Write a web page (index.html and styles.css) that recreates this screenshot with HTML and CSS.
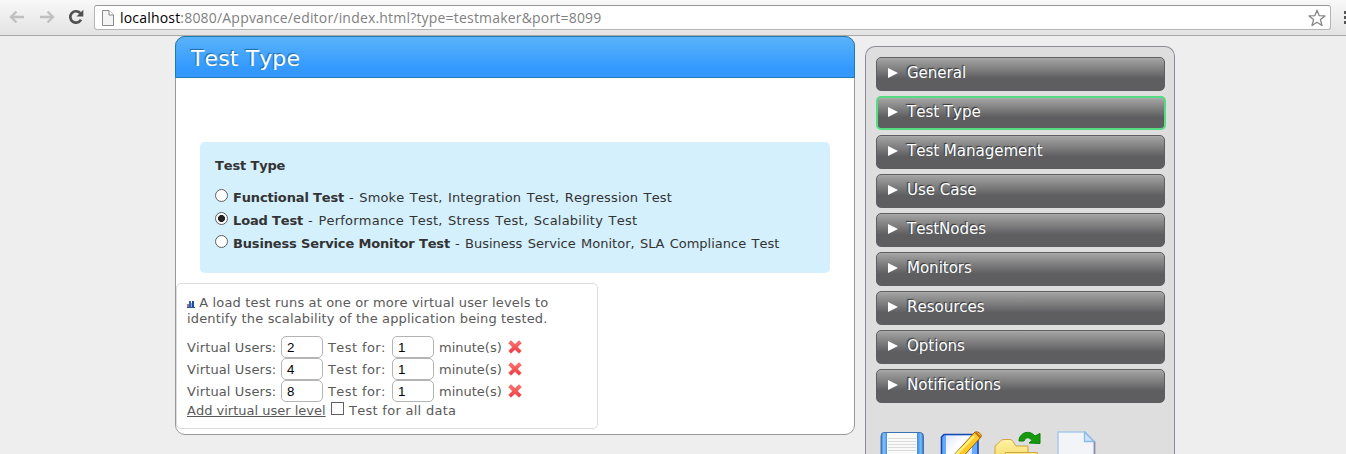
FILE: index.html
```html
<!DOCTYPE html>
<html lang="en">
<head>
<meta charset="utf-8">
<title>Test Type</title>
<link rel="stylesheet" href="styles.css">
</head>
<body>
<svg class="defs" width="0" height="0" aria-hidden="true">
  <defs>
    <linearGradient id="redGrad" x1="0" y1="0" x2="0" y2="1"><stop offset="0" stop-color="#ff7a74"/><stop offset="1" stop-color="#f0343c"/></linearGradient>
    <symbol id="cross" viewBox="0 0 14 14"><path d="M3 .8 7 4.600 11 .8 13.300 3 9.400 7l3.900 4L11 13.200 7 9.400 3 13.200.7 11l3.900-4L.7 3z" fill="url(#redGrad)" stroke="#e2555a" stroke-width=".8" stroke-linejoin="round"/></symbol>
  </defs>
</svg>
<header class="toolbar">
  <svg class="nav-icon back" width="16" height="14" viewBox="0 0 16 14"><path d="M7.500 1.500 2 7l5.500 5.500M2.500 7H15" fill="none" stroke="#c0c0c0" stroke-width="2.400"/></svg>
  <svg class="nav-icon forward" width="16" height="14" viewBox="0 0 16 14"><path d="M8.500 1.500 14 7l-5.500 5.500M13.500 7H1" fill="none" stroke="#c0c0c0" stroke-width="2.400"/></svg>
  <svg class="nav-icon reload" width="16" height="16" viewBox="0 0 16 16"><path d="M12.300 4.200A5.700 5.700 0 1 0 13 10.700" fill="none" stroke="#505050" stroke-width="2.700"/><path d="M15.300.8V7.600H8.500z" fill="#505050"/></svg>
  <div class="address">
    <svg class="page-icon" width="12" height="16" viewBox="0 0 12 16"><path d="M.5.5h6.500l4.500 4.500v10.500H.5z" fill="#f4f4f4" stroke="#8a8a8a"/><path d="M7 .5V5h4.500" fill="#fff" stroke="#8a8a8a"/></svg>
    <span class="url"><span class="host">localhost</span>:8080/Appvance/editor/index.html?type=testmaker&amp;port=8099</span>
    <svg class="star" width="18" height="18" viewBox="0 0 18 18"><path d="M9 1.200 11.100 6.600 17 6.900 12.400 10.600 14 16.500 9 13.200 4 16.500 5.600 10.600 1 6.900 6.900 6.600z" fill="#fff" stroke="#858585" stroke-width="1.300" stroke-linejoin="round"/></svg>
  </div>
  <svg class="menu" width="2" height="14" viewBox="0 0 2 14"><path d="M0 0h2v3H0zM0 5h2v3H0zM0 10h2v3H0z" fill="#555"/></svg>
</header>
<div class="layout">
  <main class="panel">
    <h1 class="panel-title">Test Type</h1>
    <section class="types">
      <h2 class="types-title">Test Type</h2>
      <label class="type"><input class="radio" type="radio" name="type"><b class="name functional">Functional Test</b><span class="detail">- Smoke Test, Integration Test, Regression Test</span></label>
      <label class="type"><input class="radio" type="radio" name="type" checked><b class="name load">Load Test</b><span class="detail detail-load">- Performance Test, Stress Test, Scalability Test</span></label>
      <label class="type"><input class="radio" type="radio" name="type"><b class="name monitor">Business Service Monitor Test</b><span class="detail detail-monitor">- Business Service Monitor, SLA Compliance Test</span></label>
    </section>
    <section class="levels">
      <p class="intro"><svg class="chart" width="8" height="8" viewBox="0 0 8 8"><path d="M0 4h2v3H0z" fill="#b06a8c"/><path d="M2 1h2v6H2z" fill="#2c66b8"/><path d="M4 3h1v4H4z" fill="#7ab0e0"/><path d="M5 1h2v6H5z" fill="#234a96"/><path d="M0 7h8v1H0z" fill="#35558f"/></svg> A load test runs at one or more virtual user levels to<br>identify the scalability of the application being tested.</p>
      <div class="level"><span class="users">Virtual Users:</span><input class="num" value="2"><span class="for">Test for:</span><input class="num" value="1"><span class="unit">minute(s)</span><svg class="remove" width="14" height="14"><use href="#cross"/></svg></div>
      <div class="level"><span class="users">Virtual Users:</span><input class="num" value="4"><span class="for">Test for:</span><input class="num" value="1"><span class="unit">minute(s)</span><svg class="remove" width="14" height="14"><use href="#cross"/></svg></div>
      <div class="level"><span class="users">Virtual Users:</span><input class="num" value="8"><span class="for">Test for:</span><input class="num" value="1"><span class="unit">minute(s)</span><svg class="remove" width="14" height="14"><use href="#cross"/></svg></div>
      <div class="extra"><a class="add">Add virtual user level</a><input class="check" type="checkbox"><span class="all-data">Test for all data</span></div>
    </section>
  </main>
  <aside class="sidebar">
    <nav class="menu-list">
      <a class="item">General</a>
      <a class="item active">Test Type</a>
      <a class="item">Test Management</a>
      <a class="item">Use Case</a>
      <a class="item">TestNodes</a>
      <a class="item">Monitors</a>
      <a class="item">Resources</a>
      <a class="item">Options</a>
      <a class="item">Notifications</a>
    </nav>
    <div class="actions">
      <svg width="46" height="23" viewBox="0 0 46 23">
        <defs><linearGradient id="disk"><stop offset="0" stop-color="#2f77c8"/><stop offset=".07" stop-color="#8cc4fa"/><stop offset=".14" stop-color="#3f8fe6"/><stop offset=".86" stop-color="#3f8fe6"/><stop offset=".94" stop-color="#7cbcf8"/><stop offset="1" stop-color="#2868b4"/></linearGradient></defs>
        <path d="M4 1.500h36q3.500 0 3.500 4V44H1V5.500q0-4 3-4z" fill="url(#disk)" stroke="#3a74b4"/><path d="M7 2h30v36H7z" fill="#fafafa"/><path d="M8 7.500h28M8 10.500h28M8 13.500h28M8 16.500h28M8 19.500h28" stroke="#dadada"/>
      </svg>
      <svg width="46" height="23" viewBox="0 0 46 23">
        <defs><linearGradient id="paper" x1="0" y1="0" x2="1" y2="1"><stop offset="0" stop-color="#dce6ff"/><stop offset=".4" stop-color="#fff"/><stop offset="1" stop-color="#c9dafa"/></linearGradient></defs>
        <path d="M4 3.500h32q2 0 2 2v37H1.500V6z" fill="#65a9f8" stroke="#1846b0" stroke-width="1.600"/><path d="M6 4.500h26v28H6z" fill="url(#paper)"/>
        <path d="M35 1q2.500-1 5 1.500 2 1.500 1 3.500L19 30l-9 4 3-9z" fill="#ffc928" stroke="#9c6200"/><path d="M34 5 13 27" stroke="#fff17c" stroke-width="2.500"/><path d="m35.500 1.500 5 5" stroke="#c47016" stroke-width="2"/>
      </svg>
      <svg width="49" height="23" viewBox="0 0 49 23">
        <defs><linearGradient id="folder" x1="0" y1="0" x2="0" y2="1"><stop offset="0" stop-color="#fff3a5"/><stop offset="1" stop-color="#eec83f"/></linearGradient></defs>
        <path d="M1 43V16q0-2 2-2.500l4-4Q8 8.500 10 8.500h6q2 0 3 2l3 4.500h12v27z" fill="url(#folder)" stroke="#cfa43b"/><path d="M8 44 11.500 21.500h32L39 44z" fill="#ffe98a" stroke="#d0a53b"/>
        <path d="M25 10c0-8 10-12 16-5l5-2.500V12.500l-11-.5 3-2.500c-3-4-6.500-3.500-8 .5z" fill="#159a0b" stroke="#087e0a"/>
      </svg>
      <svg width="42" height="23" viewBox="0 0 42 23">
        <path d="M1 1h27l9.500 9.500v34H1z" fill="#f2f4f7" stroke="#a9c9ed" stroke-width="1.500"/><path d="M27.500 1v9.500H37z" fill="#cce3fb" stroke="#8db9e7" stroke-width="1.300"/><path d="M37.500 10.500v34" stroke="#8c8cae" stroke-width="1.700"/>
      </svg>
    </div>
  </aside>
</div>
</body>
</html>
```
FILE: styles.css
```css
* { box-sizing: border-box; }
body {
  margin: 0;
  height: 454px;
  overflow: hidden;
  background: #eee;
  font: 13px/16px Verdana, "DejaVu Sans", sans-serif;
  font-kerning: none;
  color: #5a5a5a;
}
.defs { position: absolute; }
.toolbar {
  display: flex;
  align-items: flex-start;
  height: 36px;
  padding-left: 9px;
  background: linear-gradient(#f8f8f8, #e3e3e3);
  border-bottom: 1px solid #a8a8a8;
}
.nav-icon { flex: none; }
.back { margin: 10px 14px 0 0; }
.forward { margin: 10px 13px 0 0; }
.reload { margin: 9px 10px 0 0; }
.address {
  display: flex;
  align-items: center;
  width: 1237px;
  height: 25px;
  margin-top: 5px;
  padding: 0 4px 0 7px;
  background: #fff;
  border: 1px solid #b4b4b4;
  border-top-color: #989898;
  border-radius: 3px;
}
.page-icon { flex: none; margin-right: 6px; }
.url {
  flex: 1;
  font: 14px/20px "Open Sans", sans-serif;
  letter-spacing: .19px;
  color: #808080;
  white-space: nowrap;
}
.host { color: #000; }
.menu { margin: 11px 0 0 13px; }
.layout {
  display: flex;
  align-items: flex-start;
  gap: 10px;
  padding-left: 175px;
}
.panel {
  width: 680px;
  height: 399px;
  background: #fff;
  border: 1px solid #999;
  border-radius: 10px;
}
.panel-title {
  height: 42px;
  margin: -1px -1px 64px;
  padding-left: 15px;
  background: linear-gradient(#5ab3fa, #3399ff 80%);
  border: 1px solid #1c7cb0;
  border-radius: 10px 10px 0 0;
  font-size: 22px;
  font-weight: normal;
  line-height: 43px;
  letter-spacing: .12px;
  color: #fff;
  text-shadow: -1px -1px 1px #246a9c;
}
.types {
  width: 630px;
  height: 131px;
  margin: 0 0 10px 24px;
  padding: 15px 15px 0;
  background: #d4f0fd;
  border-radius: 5px;
  color: #333;
}
.types-title { margin: 0 0 13px; font-size: 13px; line-height: 17px; letter-spacing: -.15px; }
.type { display: flex; height: 23px; line-height: 22px; white-space: nowrap; }
.radio, .check {
  appearance: none;
  flex: none;
  width: 13px;
  height: 13px;
  margin: 2px 5px 0 0;
  background: #fff;
  border: 1px solid #606060;
}
.radio { border-radius: 50%; }
.radio:checked { background: radial-gradient(circle, #222 3.2px, #fff 3.8px); }
.name { flex: none; margin-right: 4px; letter-spacing: -.15px; }
.functional { width: 112px; }
.load { width: 71px; }
.monitor { width: 218px; }
.detail { word-spacing: 1.2px; letter-spacing: .14px; }
.detail-load { letter-spacing: .22px; }
.detail-monitor { letter-spacing: 0; }
.levels {
  width: 422px;
  height: 146px;
  padding: 11px 10px 0;
  border: 1px solid #dcdcdc;
  border-radius: 5px;
  white-space: nowrap;
}
.intro { margin: 0 0 9px; letter-spacing: .15px; }
.chart { vertical-align: -1px; }
.level { display: flex; height: 22px; line-height: 23px; }
.users { width: 94px; letter-spacing: .12px; }
.for { width: 64px; letter-spacing: .4px; }
.unit { width: 69px; }
.num {
  width: 42px;
  height: 22px;
  margin: 0 5px 0 0;
  padding: 1px 5px;
  border: 1px solid #b4b4b4;
  border-radius: 5px;
  background: #fff;
  font: 13.33px "Liberation Sans", Arial, sans-serif;
  color: #000;
}
.remove { margin-top: 4px; }
.extra { display: flex; line-height: 17px; }
.add { width: 139px; margin-right: 5px; text-decoration: underline; }
.check { margin-top: 0; }
.all-data { letter-spacing: .28px; }
.sidebar {
  width: 310px;
  height: 408px;
  margin-top: 10px;
  padding: 10px 10px 0;
  background: #dedede;
  border: 1px solid #8c8c98;
  border-bottom: 0;
  border-radius: 10px 10px 0 0;
}
.menu-list { display: grid; gap: 5px; width: 289px; }
.item {
  display: flex;
  align-items: center;
  width: 289px;
  height: 34px;
  padding: 0 0 2px 11px;
  background: linear-gradient(#a5a5a5, #5e5e60 65%);
  border: 1px solid #5e5e60;
  border-radius: 5px;
  box-shadow: inset 0 1px #aaa;
  font-size: 15px;
  color: #fff;
  text-shadow: -1px -1px 1px #333;
}
.item::before {
  content: "";
  margin-right: 9px;
  border: solid transparent;
  border-width: 5.5px 0 5.5px 10px;
  border-left-color: #fff;
}
.active {
  width: 290px;
  padding-left: 10px;
  border: 2px solid #55dc82;
}
.actions { display: flex; height: 23px; gap: 14px; margin: 28px 0 0 4px; }
.actions svg { flex: none; }
.actions svg:nth-child(3) { margin: 0 0 0 -6px; }
```
